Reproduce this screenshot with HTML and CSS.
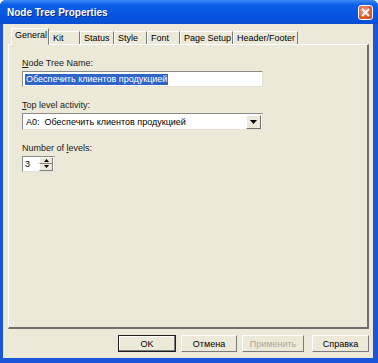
FILE: index.html
```
<!DOCTYPE html>
<html lang="ru">
<head>
    <meta charset="UTF-8">
    <title>Node Tree Properties</title>
    <link rel="stylesheet" href="styles.css">
</head>
<body>
    <div class="window">
        <div class="titlebar">
            <span class="title">Node Tree Properties</span>
            <span class="close">
                <svg width="9" height="9" viewBox="0 0 9 9"><path d="M1 1L8 8M8 1L1 8" stroke="#fff" stroke-width="2"/></svg>
            </span>
        </div>
        <div class="frame">
            <ul class="tabs">
                <li class="tab selected">General</li>
                <li class="tab t-kit">Kit</li>
                <li class="tab t-status">Status</li>
                <li class="tab t-style">Style</li>
                <li class="tab t-font">Font</li>
                <li class="tab t-page">Page Setup</li>
                <li class="tab t-header">Header/Footer</li>
            </ul>
            <div class="panel">
                <label class="label"><u>N</u>ode Tree Name:</label>
                <div class="field">
                    <span class="sel-text">Обеспечить клиентов продукцией</span>
                </div>
                <label class="label"><u>T</u>op level activity:</label>
                <div class="field combo">
                    <span class="combo-text">A0:&nbsp; Обеспечить клиентов продукцией</span>
                    <span class="drop">
                        <svg width="7" height="4" viewBox="0 0 7 4"><path d="M0 0H7L3.5 4Z" fill="#000"/></svg>
                    </span>
                </div>
                <label class="label">Number of <u>l</u>evels:</label>
                <div class="field spin">
                    <span class="spin-text">3</span>
                    <span class="spin-btns">
                        <span class="arrow"><svg width="5" height="3" viewBox="0 0 5 3"><path d="M0 3H5L2.5 0Z" fill="#000"/></svg></span>
                        <span class="arrow"><svg width="5" height="3" viewBox="0 0 5 3"><path d="M0 0H5L2.5 3Z" fill="#000"/></svg></span>
                    </span>
                </div>
            </div>
            <div class="buttons">
                <button class="btn default">OK</button>
                <button class="btn">Отмена</button>
                <button class="btn disabled">Применить</button>
                <button class="btn help">Справка</button>
            </div>
        </div>
    </div>
</body>
</html>
```
FILE: styles.css
```
*{
    margin: 0;
    padding: 0;
    box-sizing: border-box;
}
ul{
    list-style: none;
}
body{
    width: 378px;
    height: 363px;
    overflow: hidden;
    background: #ffffff;
    font-family: "Liberation Sans", Arial, sans-serif;
    font-size: 9px;
    color: #000000;
}
.window{
    width: 378px;
    height: 363px;
    display: flex;
    flex-direction: column;
    background: #1a56d8;
    border-radius: 6px 6px 0 0;
}
.titlebar{
    height: 24px;
    display: flex;
    align-items: center;
    justify-content: space-between;
    padding: 0 5px 0 7px;
    background: linear-gradient(#3d8af7 0%, #0a5fe6 20%, #0553e0 70%, #0a4fd0 100%);
    border-radius: 6px 6px 0 0;
}
.title{
    color: #ffffff;
    font-weight: bold;
    font-size: 10px;
    padding-top: 1px;
    text-shadow: 1px 1px 0 #0a2a8a;
}
.close{
    width: 15px;
    height: 15px;
    display: flex;
    align-items: center;
    justify-content: center;
    background: radial-gradient(circle at 40% 35%, #f3a58e, #e0552c 60%, #c8401e);
    border: 1px solid #ffffff;
    border-radius: 3px;
}
.frame{
    flex: 1;
    display: flex;
    flex-direction: column;
    background: #ece9d8;
    margin: 0 5px 5px 3px;
    padding: 4px 3px 0 5px;
}
.tabs{
    display: flex;
    align-items: flex-end;
    height: 16px;
    padding-left: 3px;
    position: relative;
    z-index: 1;
}
.tab{
    height: 13px;
    line-height: 12px;
    padding: 0 0 0 3px;
    border-top: 1px solid #ffffff;
    border-left: 1px solid #ffffff;
    border-right: 1px solid #7a7a7a;
    background: #ece9d8;
    white-space: nowrap;
}
.tab.selected{
    width: 38px;
    line-height: 13px;
    border-bottom: 1px solid #ece9d8;
    margin-bottom: -1px;
    height: 17px;
}
.t-kit{ width: 31px; }
.t-status{ width: 34px; }
.t-style{ width: 33px; }
.t-font{ width: 33px; }
.t-page{ width: 53px; }
.t-header{ width: 65px; }
.panel{
    flex: 1;
    display: flex;
    flex-direction: column;
    align-items: flex-start;
    padding: 13px 0 0 13px;
    border-top: 1px solid #ffffff;
    border-left: 1px solid #ffffff;
    border-right: 2px solid #6e6e6e;
    border-bottom: 2px solid #6e6e6e;
    margin-right: 1px;
}
.label{
    line-height: 10px;
    margin-bottom: 3px;
    color: #202020;
}
.label u{
    text-decoration: underline;
}
.field{
    width: 241px;
    height: 16px;
    background: #ffffff;
    border-top: 1px solid #8a8a8a;
    border-left: 1px solid #8a8a8a;
    border-right: 1px solid #e4e2d4;
    border-bottom: 1px solid #e4e2d4;
    display: flex;
    align-items: center;
    padding-left: 2px;
    margin-bottom: 13px;
}
.sel-text{
    background: #2f64c8;
    color: #ffffff;
    line-height: 11px;
    padding: 0 1px;
}
.combo{
    height: 17px;
    justify-content: space-between;
    padding-right: 1px;
}
.combo-text{
    padding-left: 1px;
}
.drop{
    width: 15px;
    height: 14px;
    display: flex;
    align-items: center;
    justify-content: center;
    background: #ece9d8;
    border-top: 1px solid #ffffff;
    border-left: 1px solid #ffffff;
    border-right: 1px solid #707070;
    border-bottom: 1px solid #707070;
}
.spin{
    width: 33px;
    height: 16px;
    justify-content: space-between;
    padding-right: 1px;
}
.spin-btns{
    width: 14px;
    height: 13px;
    display: flex;
    flex-direction: column;
}
.arrow{
    flex: 1;
    display: flex;
    align-items: center;
    justify-content: center;
    background: #ece9d8;
    border-right: 1px solid #808080;
    border-bottom: 1px solid #808080;
    border-left: 1px solid #ffffff;
}
.buttons{
    height: 29px;
    display: flex;
    justify-content: flex-end;
    align-items: flex-start;
    gap: 5px;
    padding: 6px 1px 0 0;
}
.btn{
    width: 56px;
    height: 17px;
    font-family: "Liberation Sans", Arial, sans-serif;
    font-size: 9px;
    background: #ece9d8;
    color: #000000;
    border-top: 1px solid #ffffff;
    border-left: 1px solid #ffffff;
    border-right: 1px solid #7a7a7a;
    border-bottom: 1px solid #7a7a7a;
}
.btn.default{
    width: 58px;
    border: 1px solid #202020;
    box-shadow: inset -1px -1px 0 #7a7a7a, inset 1px 1px 0 #ffffff;
}
.btn.disabled{
    width: 62px;
    color: #aca899;
}
.btn.help{
    width: 57px;
    margin-left: 3px;
}
```
